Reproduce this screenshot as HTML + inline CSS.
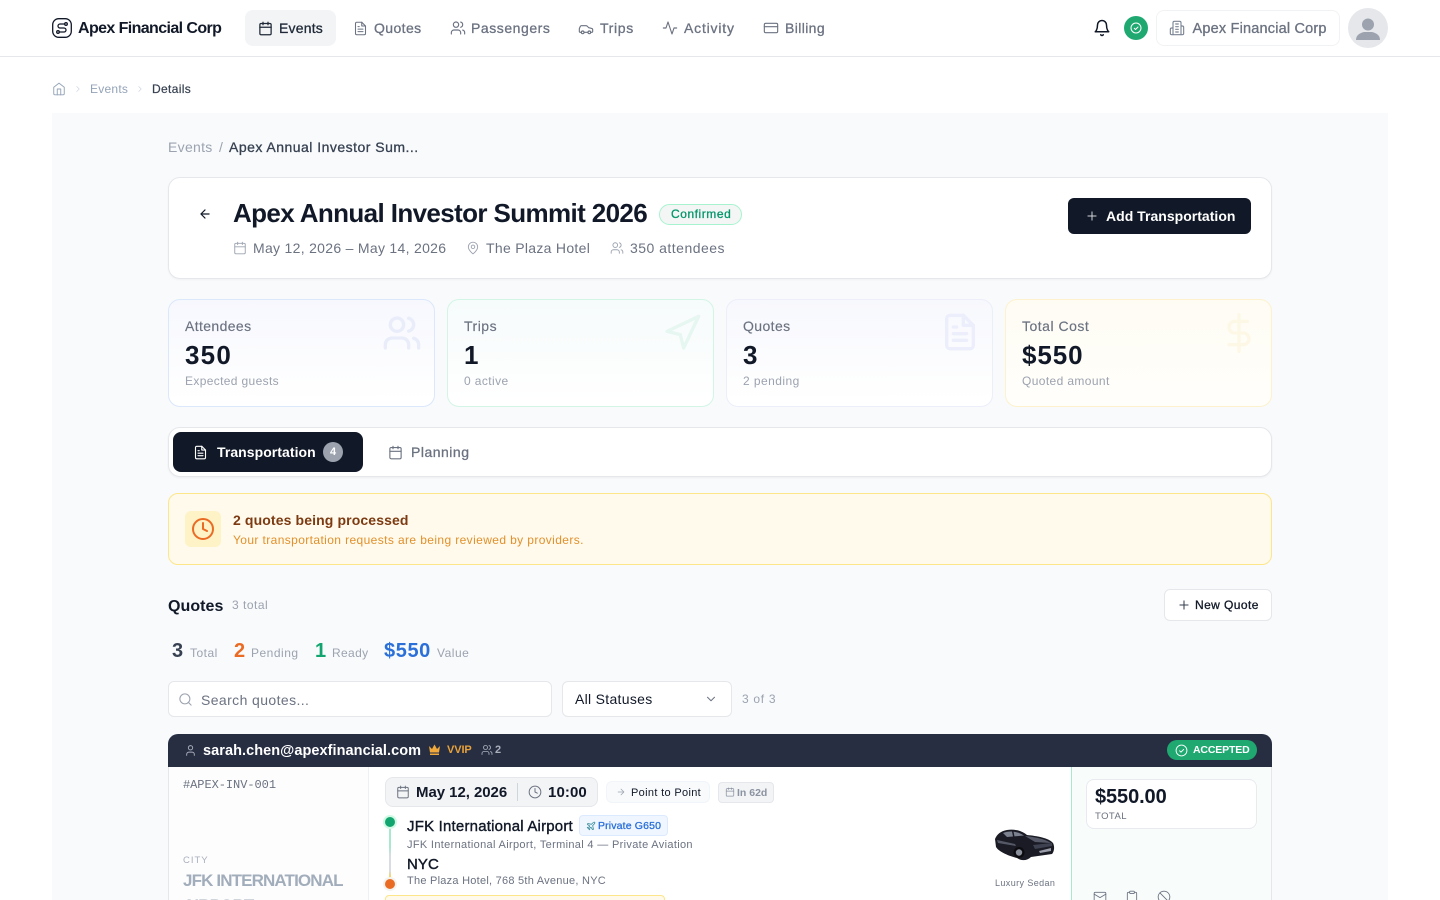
<!DOCTYPE html>
<html lang="en"><head><meta charset="utf-8"><title>Apex Annual Investor Summit 2026</title>
<style>
*{box-sizing:border-box}
html,body{margin:0;width:1440px;height:900px;overflow:hidden;background:#fff;font-family:"Liberation Sans",Arial,sans-serif;color:#111827}
#root{position:relative;width:1440px;height:900px;overflow:hidden}
.a{position:absolute}
.t{position:absolute;white-space:nowrap;line-height:20px;height:20px;letter-spacing:.3px}
.m{-webkit-text-stroke:.3px currentColor}
.b{font-weight:700}
svg.i{position:absolute;fill:none;stroke:currentColor;stroke-width:2;stroke-linecap:round;stroke-linejoin:round}
.card{position:absolute;background:#fff;border:1px solid #e5e7eb;border-radius:12px}
.stat{position:absolute;top:299px;width:267px;height:108px;border-radius:12px;border:1px solid}
</style></head><body>
<div id="root">
<svg width="0" height="0" style="position:absolute"><defs>
<symbol id="cal" viewBox="0 0 24 24"><rect x="3" y="4" width="18" height="18" rx="2"/><path d="M16 2v4M8 2v4M3 10h18"/></symbol>
<symbol id="file" viewBox="0 0 24 24"><path d="M14 2H6a2 2 0 0 0-2 2v16a2 2 0 0 0 2 2h12a2 2 0 0 0 2-2V8z"/><path d="M14 2v6h6M16 13H8M16 17H8M10 9H8"/></symbol>
<symbol id="users" viewBox="0 0 24 24"><path d="M16 21v-2a4 4 0 0 0-4-4H6a4 4 0 0 0-4 4v2"/><circle cx="9" cy="7" r="4"/><path d="M22 21v-2a4 4 0 0 0-3-3.87M16 3.13a4 4 0 0 1 0 7.75"/></symbol>
<symbol id="car" viewBox="0 0 24 24"><path d="M19 17h2c.6 0 1-.4 1-1v-3c0-.9-.7-1.7-1.500-1.900C18.700 10.600 16 10 16 10s-1.300-1.400-2.200-2.300c-.5-.4-1.100-.7-1.800-.7H5c-.6 0-1.100.4-1.400.9l-1.400 2.900A3.700 3.700 0 0 0 2 12v4c0 .6.4 1 1 1h2"/><circle cx="7" cy="17" r="2"/><path d="M9 17h6"/><circle cx="17" cy="17" r="2"/></symbol>
<symbol id="act" viewBox="0 0 24 24"><path d="M22 12h-4l-3 9L9 3l-3 9H2"/></symbol>
<symbol id="cardi" viewBox="0 0 24 24"><rect x="2" y="5" width="20" height="14" rx="2"/><path d="M2 10h20"/></symbol>
<symbol id="bell" viewBox="0 0 24 24"><path d="M6 8a6 6 0 0 1 12 0c0 7 3 9 3 9H3s3-2 3-9"/><path d="M10.300 21a1.940 1.940 0 0 0 3.400 0"/></symbol>
<symbol id="bld" viewBox="0 0 24 24"><path d="M6 22V4a2 2 0 0 1 2-2h8a2 2 0 0 1 2 2v18Z"/><path d="M6 12H4a2 2 0 0 0-2 2v6a2 2 0 0 0 2 2h2M18 9h2a2 2 0 0 1 2 2v9a2 2 0 0 1-2 2h-2M10 6h4M10 10h4M10 14h4M10 18h4"/></symbol>
<symbol id="home" viewBox="0 0 24 24"><path d="M3 9l9-7 9 7v11a2 2 0 0 1-2 2H5a2 2 0 0 1-2-2z"/><path d="M9 22V12h6v10"/></symbol>
<symbol id="chev" viewBox="0 0 24 24"><path d="M9 18l6-6-6-6"/></symbol>
<symbol id="down" viewBox="0 0 24 24"><path d="M6 9l6 6 6-6"/></symbol>
<symbol id="back" viewBox="0 0 24 24"><path d="M19 12H5M12 19l-7-7 7-7"/></symbol>
<symbol id="right" viewBox="0 0 24 24"><path d="M5 12h14M12 5l7 7-7 7"/></symbol>
<symbol id="plus" viewBox="0 0 24 24"><path d="M5 12h14M12 5v14"/></symbol>
<symbol id="pin" viewBox="0 0 24 24"><path d="M20 10c0 6-8 12-8 12s-8-6-8-12a8 8 0 0 1 16 0Z"/><circle cx="12" cy="10" r="3"/></symbol>
<symbol id="send" viewBox="0 0 24 24"><path d="M3 11l19-9-9 19-2-8z"/></symbol>
<symbol id="dollar" viewBox="0 0 24 24"><path d="M12 1v22M17 5H9.500a3.500 3.500 0 0 0 0 7h5a3.500 3.500 0 0 1 0 7H6"/></symbol>
<symbol id="clock" viewBox="0 0 24 24"><circle cx="12" cy="12" r="10"/><path d="M12 6v6l4 2"/></symbol>
<symbol id="search" viewBox="0 0 24 24"><circle cx="11" cy="11" r="8"/><path d="M21 21l-4.350-4.350"/></symbol>
<symbol id="user" viewBox="0 0 24 24"><path d="M19 21v-2a4 4 0 0 0-4-4H9a4 4 0 0 0-4 4v2"/><circle cx="12" cy="7" r="4"/></symbol>
<symbol id="ok" viewBox="0 0 24 24"><circle cx="12" cy="12" r="10"/><path d="M8.500 12.500l2.500 2.500 5-5"/></symbol>
<symbol id="mail" viewBox="0 0 24 24"><rect x="2" y="4" width="20" height="16" rx="2"/><path d="M22 7l-10 6L2 7"/></symbol>
<symbol id="clip" viewBox="0 0 24 24"><rect x="8" y="2" width="8" height="4" rx="1"/><path d="M16 4h2a2 2 0 0 1 2 2v14a2 2 0 0 1-2 2H6a2 2 0 0 1-2-2V6a2 2 0 0 1 2-2h2"/></symbol>
<symbol id="ban" viewBox="0 0 24 24"><circle cx="12" cy="12" r="10"/><path d="M4.900 4.900l14.200 14.200"/></symbol>
<symbol id="plane" viewBox="0 0 24 24"><path d="M17.800 19.200L16 11l3.500-3.500C21 6 21.500 4 21 3c-1-.5-3 0-4.500 1.500L13 8 4.800 6.200c-.5-.1-.9.1-1.100.5l-.3.5c-.2.5-.1 1 .3 1.300L9 12l-2 3H4l-1 1 3 2 2 3 1-1v-3l3-2 3.500 5.300c.3.4.8.5 1.300.3l.5-.2c.4-.3.6-.7.5-1.200z"/></symbol>
</defs></svg>

<!-- top nav -->
<header class="a" style="left:0;top:0;width:1440px;height:57px;background:#fff;border-bottom:1px solid #e5e7eb">
<svg class="a" style="left:52px;top:18px" width="20" height="20" viewBox="0 0 20 20" fill="none" stroke="#111827" stroke-width="1.300"><rect x=".7" y=".7" width="18.600" height="18.600" rx="6"/><path d="M13 6H8a2 2 0 0 0 0 4h4a2 2 0 0 1 0 4H6.500"/><circle cx="14" cy="6" r="1.300"/><circle cx="6" cy="14" r="1.300"/></svg>
<span class="t b" style="left:78px;top:19px;font-size:16px;letter-spacing:-.6px;color:#111827">Apex Financial Corp</span>
<div class="a" style="left:245px;top:10px;width:91px;height:36px;background:#f3f4f6;border-radius:8px"></div>
<svg class="i" style="left:258px;top:20.500px;color:#1f2937" width="15" height="15"><use href="#cal"/></svg>
<span class="t m" style="left:279px;top:18px;font-size:14px;letter-spacing:.2px;color:#1f2937">Events</span>
<svg class="i" style="left:353px;top:20.500px;color:#6b7280;stroke-width:1.700" width="15" height="15"><use href="#file"/></svg>
<span class="t m" style="left:374px;top:18px;font-size:14px;letter-spacing:.4px;color:#6b7280">Quotes</span>
<svg class="i" style="left:450px;top:20px;color:#6b7280;stroke-width:1.700" width="16" height="16"><use href="#users"/></svg>
<span class="t m" style="left:471px;top:18px;font-size:14px;letter-spacing:.55px;color:#6b7280">Passengers</span>
<svg class="i" style="left:578px;top:21px;color:#6b7280;stroke-width:1.700" width="16" height="16"><use href="#car"/></svg>
<span class="t m" style="left:600px;top:18px;font-size:14px;letter-spacing:.65px;color:#6b7280">Trips</span>
<svg class="i" style="left:662px;top:20px;color:#6b7280;stroke-width:1.700" width="16" height="16"><use href="#act"/></svg>
<span class="t m" style="left:684px;top:18px;font-size:14px;letter-spacing:.8px;color:#6b7280">Activity</span>
<svg class="i" style="left:763px;top:20px;color:#6b7280;stroke-width:1.700" width="16" height="16"><use href="#cardi"/></svg>
<span class="t m" style="left:785px;top:18px;font-size:14px;letter-spacing:.38px;color:#6b7280">Billing</span>
<svg class="i" style="left:1093px;top:19px;color:#111827" width="18" height="18"><use href="#bell"/></svg>
<div class="a" style="left:1124px;top:16px;width:24px;height:24px;border-radius:50%;background:#1fa971"></div>
<svg class="i" style="left:1130px;top:22px;color:#fff" width="12" height="12"><use href="#ok"/></svg>
<div class="a" style="left:1156px;top:10px;width:184px;height:36px;border:1px solid #f1f2f4;border-radius:8px"></div>
<svg class="i" style="left:1169px;top:20px;color:#7b8494;stroke-width:1.700" width="16" height="16"><use href="#bld"/></svg>
<span class="t m" style="left:1192.500px;top:18.500px;font-size:14.500px;letter-spacing:.19px;color:#6b7280">Apex Financial Corp</span>
<div class="a" style="left:1348px;top:8px;width:40px;height:40px;border-radius:50%;background:#e5e7eb"></div>
<svg class="a" style="left:1356px;top:18px" width="24" height="22" viewBox="0 0 24 22"><circle cx="12" cy="6.500" r="6" fill="#9ca3af"/><path d="M0 22c0-5 4-7 8-8h8c4 1 8 3 8 8z" fill="#9ca3af"/></svg>
</header>

<!-- breadcrumbs -->
<svg class="i" style="left:52px;top:82px;color:#94a3b8;stroke-width:1.600" width="14" height="14"><use href="#home"/></svg>
<svg class="i" style="left:73px;top:84px;color:#cbd5e1;stroke-width:1.500" width="10" height="10"><use href="#chev"/></svg>
<span class="t" style="left:90px;top:79px;font-size:12px;letter-spacing:.25px;color:#94a3b8">Events</span>
<svg class="i" style="left:135px;top:84px;color:#cbd5e1;stroke-width:1.500" width="10" height="10"><use href="#chev"/></svg>
<span class="t m" style="left:152px;top:79px;font-size:12px;letter-spacing:.35px;-webkit-text-stroke-width:.2px;color:#374151">Details</span>

<!-- main panel -->
<main class="a" style="left:52px;top:113px;width:1336px;height:787px;background:#f8fafc"></main>

<span class="t" style="left:168px;top:137px;font-size:14px;color:#9ca3af;letter-spacing:.3px">Events</span>
<span class="t" style="left:219px;top:137px;font-size:14px;color:#9ca3af">/</span>
<span class="t m" style="left:229px;top:137px;font-size:14px;color:#374151;letter-spacing:.48px">Apex Annual Investor Sum...</span>

<!-- hero -->
<div class="card" style="left:168px;top:177px;width:1104px;height:102px;box-shadow:0 1px 2px rgba(0,0,0,.04)"></div>
<svg class="i" style="left:198px;top:207px;color:#111827" width="14" height="14"><use href="#back"/></svg>
<span class="t b" style="left:233px;top:198px;height:30px;line-height:30px;font-size:26px;letter-spacing:-.62px;color:#111827">Apex Annual Investor Summit 2026</span>
<div class="a" style="left:659px;top:204px;width:83px;height:21px;border-radius:11px;background:#f3f6f5;border:1px solid #a7f3d0"></div>
<span class="t m" style="left:671px;top:204px;font-size:12px;letter-spacing:.55px;color:#059669">Confirmed</span>
<svg class="i" style="left:233px;top:241px;color:#9ca3af;stroke-width:1.600" width="14" height="14"><use href="#cal"/></svg>
<span class="t" style="left:253px;top:238px;font-size:14px;letter-spacing:.3px;color:#6b7280">May 12, 2026 – May 14, 2026</span>
<svg class="i" style="left:466px;top:241px;color:#9ca3af;stroke-width:1.600" width="14" height="14"><use href="#pin"/></svg>
<span class="t" style="left:486px;top:238px;font-size:14px;letter-spacing:.3px;color:#6b7280">The Plaza Hotel</span>
<svg class="i" style="left:610px;top:241px;color:#9ca3af;stroke-width:1.600" width="14" height="14"><use href="#users"/></svg>
<span class="t" style="left:630px;top:238px;font-size:14px;letter-spacing:.48px;color:#6b7280">350 attendees</span>
<div class="a" style="left:1068px;top:198px;width:183px;height:36px;border-radius:6px;background:#111827"></div>
<svg class="i" style="left:1085px;top:209px;color:#d1d5db;stroke-width:1.700" width="14" height="14"><use href="#plus"/></svg>
<span class="t b" style="left:1106px;top:206px;font-size:14px;letter-spacing:.02px;color:#fff">Add Transportation</span>

<!-- stats -->
<div class="stat" style="left:168px;border-color:#dbe7fb;background:linear-gradient(180deg,#f7f8fe,#fff 95%)"></div>
<div class="stat" style="left:447px;border-color:#d3f5e5;background:linear-gradient(180deg,#f6fbfb,#fff 95%)"></div>
<div class="stat" style="left:726px;border-color:#eceefa;background:linear-gradient(180deg,#f7f8fd,#fff 95%)"></div>
<div class="stat" style="left:1005px;border-color:#fdf2cd;background:linear-gradient(180deg,#fefcf3,#fffefb 95%)"></div>

<svg class="i" style="left:382px;top:313px;color:#e9edfa" width="40" height="40"><use href="#users"/></svg>
<svg class="i" style="left:662px;top:313px;color:#e6f6f1" width="40" height="40"><use href="#send"/></svg>
<svg class="i" style="left:940px;top:312px;color:#eceefb" width="40" height="40"><use href="#file"/></svg>
<svg class="i" style="left:1219px;top:313px;color:#fdf8e6" width="40" height="40"><use href="#dollar"/></svg>

<span class="t m" style="left:185px;top:316px;font-size:14px;letter-spacing:.38px;-webkit-text-stroke-width:.15px;color:#6b7280">Attendees</span>
<span class="t b" style="left:185px;top:340px;height:30px;line-height:30px;font-size:26px;letter-spacing:1.200px">350</span>
<span class="t" style="left:185px;top:371px;font-size:12px;letter-spacing:.35px;color:#9ca3af">Expected guests</span>
<span class="t m" style="left:464px;top:316px;font-size:14px;letter-spacing:.5px;-webkit-text-stroke-width:.15px;color:#6b7280">Trips</span>
<span class="t b" style="left:464px;top:340px;height:30px;line-height:30px;font-size:26px">1</span>
<span class="t" style="left:464px;top:371px;font-size:12px;letter-spacing:.4px;color:#9ca3af">0 active</span>
<span class="t m" style="left:743px;top:316px;font-size:14px;letter-spacing:.4px;-webkit-text-stroke-width:.15px;color:#6b7280">Quotes</span>
<span class="t b" style="left:743px;top:340px;height:30px;line-height:30px;font-size:26px">3</span>
<span class="t" style="left:743px;top:371px;font-size:12px;letter-spacing:.45px;color:#9ca3af">2 pending</span>
<span class="t m" style="left:1022px;top:316px;font-size:14px;letter-spacing:.5px;-webkit-text-stroke-width:.15px;color:#6b7280">Total Cost</span>
<span class="t b" style="left:1022px;top:340px;height:30px;line-height:30px;font-size:26px;letter-spacing:.9px">$550</span>
<span class="t" style="left:1022px;top:371px;font-size:12px;letter-spacing:.38px;color:#9ca3af">Quoted amount</span>

<!-- tabs -->
<div class="card" style="left:168px;top:427px;width:1104px;height:50px;box-shadow:0 1px 2px rgba(0,0,0,.05)"></div>
<div class="a" style="left:173px;top:432px;width:190px;height:40px;border-radius:8px;background:#111827"></div>
<svg class="i" style="left:193px;top:444.500px;color:#fff;stroke-width:1.800" width="15" height="15"><use href="#file"/></svg>
<span class="t b" style="left:217px;top:442px;font-size:14px;letter-spacing:.05px;color:#fff">Transportation</span>
<div class="a" style="left:323px;top:442px;width:20px;height:20px;border-radius:50%;background:#9ca3af"></div>
<span class="t b" style="left:330px;top:442px;font-size:11px;letter-spacing:0;color:#fff">4</span>
<svg class="i" style="left:387.500px;top:444.500px;color:#6b7280;stroke-width:1.800" width="15" height="15"><use href="#cal"/></svg>
<span class="t m" style="left:411px;top:442px;font-size:14px;letter-spacing:.5px;color:#6b7280">Planning</span>

<!-- alert -->
<div class="a" style="left:168px;top:493px;width:1104px;height:72px;background:#fffaeb;border:1px solid #fde68a;border-radius:10px"></div>
<div class="a" style="left:185px;top:511px;width:36px;height:36px;background:#fef3c7;border-radius:6px"></div>
<svg class="i" style="left:191px;top:517px;color:#ea6c24" width="24" height="24"><use href="#clock"/></svg>
<span class="t b" style="left:233px;top:510px;font-size:14px;letter-spacing:.12px;color:#7c3a12">2 quotes being processed</span>
<span class="t" style="left:233px;top:530px;font-size:12px;letter-spacing:.39px;color:#e1902c">Your transportation requests are being reviewed by providers.</span>

<!-- quotes head -->
<span class="t b" style="left:168px;top:597px;font-size:16px;letter-spacing:.05px;color:#111827">Quotes</span>
<span class="t" style="left:232px;top:595px;font-size:12px;letter-spacing:.5px;color:#9ca3af">3 total</span>
<div class="a" style="left:1164px;top:589px;width:108px;height:32px;background:#fff;border:1px solid #e5e7eb;border-radius:6px"></div>
<svg class="i" style="left:1177px;top:598px;color:#374151;stroke-width:1.800" width="14" height="14"><use href="#plus"/></svg>
<span class="t m" style="left:1195px;top:595px;font-size:12px;letter-spacing:.42px;color:#111827">New Quote</span>

<span class="t b" style="left:172px;top:641px;font-size:20px;letter-spacing:0;color:#374151">3</span>
<span class="t" style="left:190px;top:643px;font-size:12px;letter-spacing:.5px;color:#9ca3af">Total</span>
<span class="t b" style="left:234px;top:641px;font-size:20px;letter-spacing:0;color:#ea6c24">2</span>
<span class="t" style="left:251px;top:643px;font-size:12px;letter-spacing:.5px;color:#9ca3af">Pending</span>
<span class="t b" style="left:315px;top:641px;font-size:20px;letter-spacing:0;color:#13a56f">1</span>
<span class="t" style="left:332px;top:643px;font-size:12px;letter-spacing:.35px;color:#9ca3af">Ready</span>
<span class="t b" style="left:384px;top:641px;font-size:20px;letter-spacing:.6px;color:#2b6fd8">$550</span>
<span class="t" style="left:437px;top:643px;font-size:12px;letter-spacing:.5px;color:#9ca3af">Value</span>

<!-- filters -->
<div class="a" style="left:168px;top:681px;width:384px;height:36px;background:#fff;border:1px solid #e5e7eb;border-radius:6px"></div>
<svg class="i" style="left:178px;top:692px;color:#9ca3af;stroke-width:1.700" width="15" height="15"><use href="#search"/></svg>
<span class="t" style="left:201px;top:690px;font-size:14px;letter-spacing:.4px;color:#6b7280">Search quotes...</span>
<div class="a" style="left:562px;top:681px;width:170px;height:36px;background:#fff;border:1px solid #e5e7eb;border-radius:6px"></div>
<span class="t" style="left:575px;top:689px;font-size:14px;letter-spacing:.3px;color:#111827">All Statuses</span>
<svg class="i" style="left:704px;top:692px;color:#6b7280;stroke-width:1.800" width="14" height="14"><use href="#down"/></svg>
<span class="t" style="left:742px;top:689px;font-size:12px;letter-spacing:.7px;color:#9ca3af">3 of 3</span>

<!-- quote card -->
<div class="a" style="left:168px;top:734px;width:1104px;height:180px;background:#fff;border:1px solid #e5e7eb;border-radius:10px;overflow:hidden">
  <div class="a" style="left:0;top:32px;width:200px;height:150px;background:#fdfdfe;border-right:1px solid #eef0f3"></div>
  <div class="a" style="left:902px;top:32px;width:201px;height:150px;background:#f8fdfc;border-left:1px solid #a7e8cf"></div>
</div>
<div class="a" style="left:168px;top:734px;width:1104px;height:33px;background:#272e42;border-radius:10px 10px 0 0"></div>
<svg class="i" style="left:184px;top:744px;color:#aab0bb;stroke-width:1.700" width="13" height="13"><use href="#user"/></svg>
<span class="t b" style="left:203px;top:740.500px;font-size:14.500px;letter-spacing:.06px;color:#fff">sarah.chen@apexfinancial.com</span>
<svg class="a" style="left:428px;top:744px" width="13" height="11" viewBox="0 0 13 11" fill="#f0a93a"><path d="M1 2l3 3 2.500-4.500L9 5l3-3-1 6.500H2zM2 9.500h9V11H2z"/></svg>
<span class="t b" style="left:447px;top:740px;font-size:11px;letter-spacing:-.1px;color:#e8a23a">VVIP</span>
<svg class="i" style="left:481px;top:744px;color:#aab0bb;stroke-width:1.700" width="12" height="12"><use href="#users"/></svg>
<span class="t b" style="left:495px;top:740px;font-size:11px;color:#aab0bb">2</span>
<div class="a" style="left:1167px;top:740px;width:90px;height:20px;border-radius:10px;background:#1fa971"></div>
<svg class="i" style="left:1175px;top:743.500px;color:#fff;stroke-width:1.700" width="13" height="13"><use href="#ok"/></svg>
<span class="t b" style="left:1193px;top:740px;font-size:10.500px;letter-spacing:-.15px;color:#fff">ACCEPTED</span>

<span class="t" style="left:183px;top:775px;font-family:'Liberation Mono',monospace;font-size:12px;letter-spacing:-.05px;color:#6b7280">#APEX-INV-001</span>
<span class="t" style="left:183px;top:851px;font-size:9.500px;letter-spacing:1px;color:#a9b0bc">CITY</span>
<span class="t b" style="left:183px;top:871px;font-size:17px;letter-spacing:-.87px;color:#a2adbb">JFK INTERNATIONAL</span>
<span class="t b" style="left:183px;top:896px;font-size:17px;letter-spacing:-.87px;color:#a2adbb">AIRPORT</span>

<div class="a" style="left:385px;top:777px;width:213px;height:30px;background:#f3f4f6;border:1px solid #e5e7eb;border-radius:8px"></div>
<svg class="i" style="left:396px;top:785px;color:#6b7280;stroke-width:1.700" width="14" height="14"><use href="#cal"/></svg>
<span class="t b" style="left:416px;top:782.500px;font-size:15px;letter-spacing:-.05px;color:#111827">May 12, 2026</span>
<div class="a" style="left:517px;top:783px;width:1px;height:18px;background:#d1d5db"></div>
<svg class="i" style="left:528px;top:785px;color:#6b7280;stroke-width:1.700" width="14" height="14"><use href="#clock"/></svg>
<span class="t b" style="left:548px;top:782.500px;font-size:15px;letter-spacing:.1px;color:#111827">10:00</span>
<div class="a" style="left:606px;top:781px;width:104px;height:22px;background:#f8fafc;border:1px solid #f1f5f9;border-radius:6px"></div>
<svg class="i" style="left:616px;top:787px;color:#9ca3af;stroke-width:1.800" width="10" height="10"><use href="#right"/></svg>
<span class="t" style="left:631px;top:782.500px;font-size:11px;letter-spacing:.33px;color:#111827">Point to Point</span>
<div class="a" style="left:718px;top:782px;width:56px;height:21px;background:#f3f4f6;border:1px solid #e5e7eb;border-radius:4px"></div>
<svg class="i" style="left:725px;top:787px;color:#8b93a1;stroke-width:1.800" width="10" height="10"><use href="#cal"/></svg>
<span class="t b" style="left:737px;top:782.500px;font-size:10.500px;letter-spacing:0;color:#8b93a1">In 62d</span>

<div class="a" style="left:383px;top:815px;width:14px;height:14px;border-radius:50%;background:#d1fae5"></div>
<div class="a" style="left:385px;top:817px;width:10px;height:10px;border-radius:50%;background:#13a56f"></div>
<div class="a" style="left:389px;top:829px;width:2px;height:49px;background:linear-gradient(180deg,#a7e8cf 0,#a7e8cf 35%,#d9dce3 55%,#d9dce3 85%,#fcd34d)"></div>
<div class="a" style="left:383px;top:877px;width:14px;height:14px;border-radius:50%;background:#f3f4f0"></div>
<div class="a" style="left:385px;top:879px;width:10px;height:10px;border-radius:50%;background:#ea6c24"></div>

<span class="t m" style="left:407px;top:817px;font-size:15px;letter-spacing:.2px;-webkit-text-stroke-width:.4px;color:#111827">JFK International Airport</span>
<div class="a" style="left:579px;top:815px;width:89px;height:21px;background:#eff6ff;border:1px solid #dbeafe;border-radius:4px"></div>
<svg class="i" style="left:586px;top:821px;color:#3d8f9e;stroke-width:2" width="10" height="10"><use href="#plane"/></svg>
<span class="t m" style="left:598px;top:816px;font-size:10.500px;letter-spacing:.15px;color:#2b6fd8">Private G650</span>
<span class="t" style="left:407px;top:835px;font-size:11px;letter-spacing:.33px;color:#6b7280">JFK International Airport, Terminal 4 — Private Aviation</span>
<span class="t m" style="left:407px;top:855px;font-size:15px;letter-spacing:.1px;-webkit-text-stroke-width:.4px;color:#111827">NYC</span>
<span class="t" style="left:407px;top:871px;font-size:11px;letter-spacing:.25px;color:#6b7280">The Plaza Hotel, 768 5th Avenue, NYC</span>
<div class="a" style="left:385px;top:895px;width:280px;height:20px;background:#fffaeb;border:1px solid #fde68a;border-radius:4px"></div>

<!-- car -->
<svg class="a" style="left:995px;top:825px" width="60" height="38" viewBox="0 0 60 38">
<path d="M0 14C2 9 6 6 12 5 18 4 26 5 32 10 42 11 54 13 58 18 60 22 59 27 57 29L36 32C32 36 26 36 22 33 14 31 4 27 1 22Z" fill="#1a1b24"/>
<path d="M8 8C14 5.500 22 6 29 10.500L12 12Z" fill="#7c8190"/>
<path d="M17 6.500h1.500l1 5h-1.500z" fill="#1a1b24"/>
<path d="M30 11C40 12 50 14 56 18L40 17Z" fill="#565a68"/>
<path d="M38 20l19-2v3l-17 3z" fill="#3e4250"/>
<path d="M44 26l12-3v3l-11 2z" fill="#9a9eaa"/>
<path d="M2 15l18 4 1 2L3 18Z" fill="#555967"/>
<circle cx="24" cy="27.500" r="5.500" fill="#0c0c10"/><circle cx="24" cy="27.500" r="3.200" fill="#8b8f9c"/>
</svg>
<span class="t" style="left:995px;top:873px;font-size:9px;letter-spacing:.4px;color:#6b7280">Luxury Sedan</span>

<!-- price -->
<div class="a" style="left:1086px;top:779px;width:171px;height:50px;background:#fff;border:1px solid #e8eaf0;border-radius:8px"></div>
<span class="t b" style="left:1095px;top:787px;font-size:20px;letter-spacing:-.1px;color:#111827">$550.00</span>
<span class="t" style="left:1095px;top:807px;font-size:9.500px;letter-spacing:.45px;color:#6b7280">TOTAL</span>
<svg class="i" style="left:1093px;top:890px;color:#6b7280;stroke-width:1.500" width="14" height="14"><use href="#mail"/></svg>
<svg class="i" style="left:1125px;top:890px;color:#6b7280;stroke-width:1.500" width="14" height="14"><use href="#clip"/></svg>
<svg class="i" style="left:1157px;top:890px;color:#6b7280;stroke-width:1.500" width="14" height="14"><use href="#ban"/></svg>
</div>
</body></html>
